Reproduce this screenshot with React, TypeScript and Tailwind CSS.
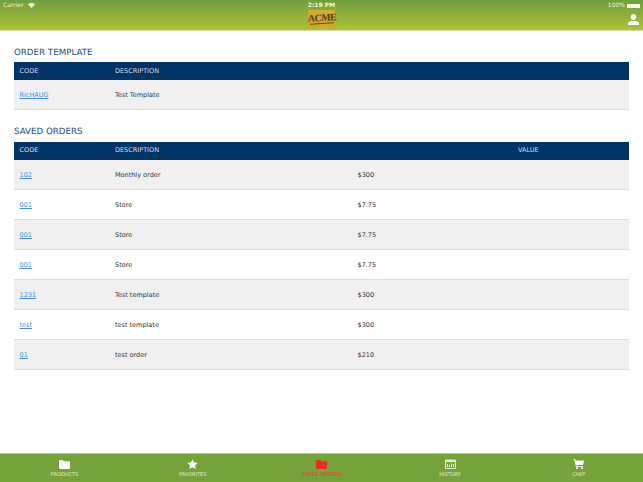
import React from "react";

const font = { fontFamily: '"DejaVu Sans", sans-serif' };

function FolderIcon({ color }: { color: string }) {
  return (
    <svg width="11" height="9" viewBox="0 0 11 9">
      <path d="M0 1.2C0 .5.5 0 1.2 0h2.600l1 1.200h5c.7 0 1.200.5 1.200 1.200v5.400c0 .7-.5 1.200-1.200 1.200H1.200C.5 9 0 8.500 0 7.800z" fill={color} />
    </svg>
  );
}
function StarIcon() {
  return (
    <svg width="11" height="10" viewBox="0 0 24 23">
      <path d="M12 0l3.700 7.800 8.300 1.100-6.100 5.800 1.600 8.300L12 19l-7.500 4 1.600-8.300L0 8.900l8.300-1.100z" fill="#fff" />
    </svg>
  );
}
function CalendarIcon() {
  return (
    <svg width="11" height="10" viewBox="0 0 11 10">
      <rect x="0" y="0.500" width="11" height="9.500" rx="1" fill="#e4ecd8" />
      <rect x="1" y="3" width="9" height="6" fill="#7fa446" />
      <path d="M2 5h1v3H2zM4 6h1v2H4zM6 4.500h1V8H6zM8 5h1v3H8z" fill="#e4ecd8" />
    </svg>
  );
}
function CartIcon() {
  return (
    <svg width="11" height="10" viewBox="0 0 11 10">
      <path d="M0 0h2l.6 1.500H11L10 6H3.400l.2 1H10v.8H2.800L1.400.8H0z" fill="#fff" />
      <circle cx="4" cy="9" r="1" fill="#fff" />
      <circle cx="9" cy="9" r="1" fill="#fff" />
    </svg>
  );
}
function UserIcon() {
  return (
    <svg width="11" height="11" viewBox="0 0 11 11">
      <ellipse cx="5.500" cy="3" rx="2.700" ry="3" fill="#fff" />
      <path d="M0 11V9.300c0-1 1.500-1.600 3.600-2.200h3.800c2.100.6 3.600 1.200 3.600 2.200V11z" fill="#fff" />
    </svg>
  );
}
function WifiIcon() {
  return (
    <svg width="7" height="5" viewBox="0 0 7 5">
      <path d="M0 1.500C2-.4 5-.4 7 1.500L3.500 5z" fill="#eef3dc" />
    </svg>
  );
}
function Logo() {
  return (
    <div className="flex h-[18px] w-[27px] items-center justify-center bg-[#d2aa30]">
      <span className="flex h-[10px] w-[24px] -skew-y-3 items-center justify-center border-b border-[#5c4d20] text-[10px] leading-none font-bold tracking-[-0.5px] text-[#4a3d1c] [font-family:'Liberation_Serif',serif]">ACME</span>
    </div>
  );
}

function Link({ children }: { children: React.ReactNode }) {
  return <span className="text-[#3f8fe0] underline">{children}</span>;
}

const rows = [
  ["102", "Monthly order", "$300"],
  ["001", "Store", "$7.75"],
  ["001", "Store", "$7.75"],
  ["001", "Store", "$7.75"],
  ["1231", "Test template", "$300"],
  ["test", "test template", "$300"],
  ["01", "test order", "$210"],
];

const tabs: [string, React.ReactNode, boolean][] = [
  ["PRODUCTS", <FolderIcon color="#fff" />, false],
  ["FAVORITES", <StarIcon />, false],
  ["SAVED ORDERS", <FolderIcon color="#ee2a24" />, true],
  ["HISTORY", <CalendarIcon />, false],
  ["CART", <CartIcon />, false],
];

export default function App() {
  return (
    <div className="flex h-[482px] w-[643px] flex-col overflow-hidden bg-white [text-rendering:geometricPrecision]" style={font}>
      <header className="relative flex h-[31px] shrink-0 items-start justify-between border-b border-[#d5dfa0] bg-gradient-to-b from-[#6f9f3c] to-[#adc138]">
        <div className="flex items-center gap-1 pl-[3px] pt-[2px] text-[6px] leading-[7px] text-[#eef3dc]">
          <span>Carrier</span>
          <WifiIcon />
        </div>
        <div className="absolute left-0 right-0 top-0 flex flex-col items-center">
          <span className="mt-[2px] text-[6px] leading-[7px] font-bold text-[#f4f7e4]">2:19 PM</span>
          <div className="mt-[1px]">
            <Logo />
          </div>
        </div>
        <div className="flex flex-col items-end pt-[2px] pr-[3px]">
          <div className="flex items-center gap-[2px] text-[6px] leading-[7px] text-[#eef3dc]">
            <span>100%</span>
            <span className="h-[4px] w-[13px] bg-[#f4f7e4]" />
          </div>
          <div className="mt-[5px] mr-[1px]">
            <UserIcon />
          </div>
        </div>
      </header>

      <main className="flex-1 px-[14px]">
        <h2 className="mt-[17px] mb-[3px] text-[8.700px] leading-[11px] text-[#1f4a78]">ORDER TEMPLATE</h2>
        <div>
          <div className="flex h-[18px] items-center bg-[#003366] pt-[1px] text-[6.500px] text-[#d5dfe9]">
            <span className="w-[101px] pl-[5.500px]">CODE</span>
            <span>DESCRIPTION</span>
          </div>
          <div className="flex h-[30px] items-center border-b border-[#dcdcdc] bg-[#f0f0f0] pt-[2px] text-[6.500px] text-[#333]">
            <span className="w-[101px] pl-[5.500px]"><Link>RicHAUG</Link></span>
            <span>Test Template</span>
          </div>
        </div>

        <h2 className="mt-[17px] mb-[4px] text-[8.700px] leading-[11px] text-[#1f4a78]">SAVED ORDERS</h2>
        <div>
          <div className="flex h-[18px] items-center bg-[#003366] text-[6.500px] text-[#d5dfe9]">
            <span className="w-[101px] pl-[5.500px]">CODE</span>
            <span className="w-[403px]">DESCRIPTION</span>
            <span>VALUE</span>
          </div>
          {rows.map((r, i) => (
            <div
              key={i}
              className={`flex h-[30px] items-center border-b border-[#dcdcdc] pt-[2px] text-[6.500px] text-[#333] ${i % 2 === 0 ? "bg-[#f0f0f0]" : "bg-white"}`}
            >
              <span className="w-[101px] pl-[5.500px]"><Link>{r[0]}</Link></span>
              <span className="w-[242.500px]">{r[1]}</span>
              <span>{r[2]}</span>
            </div>
          ))}
        </div>
      </main>

      <footer className="flex h-[29px] shrink-0 items-start justify-around border-t border-[#b5c79a] bg-[#75a23a]">
        {tabs.map(([label, icon, active]) => (
          <div key={label} className="flex w-[128.600px] flex-col items-center pt-[5px]">
            <div className="flex h-[10px] items-center">{icon}</div>
            <span className={`mt-[3px] text-[5px] leading-[6px] ${active ? "text-[#e23a22]" : "text-[#e4ecd8]"}`}>{label}</span>
          </div>
        ))}
      </footer>
    </div>
  );
}
